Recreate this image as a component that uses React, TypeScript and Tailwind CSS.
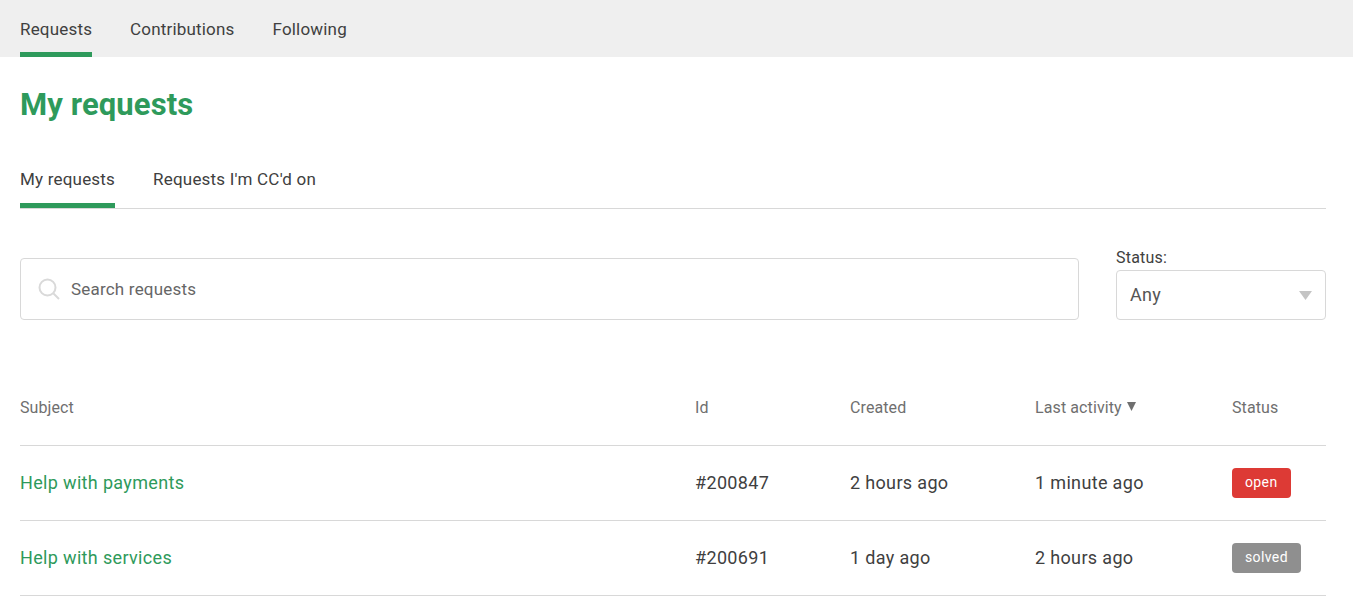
const green = "text-[#2e9a5b]";

function Tab({ label, active, small }: { label: string; active?: boolean; small?: boolean }) {
  return (
    <div
      className={`flex items-start border-b-[5px] text-[17px] text-[#404040] ${
        active ? "border-[#2e9a5b]" : "border-transparent"
      } ${small ? "h-[50px] pt-[9px] leading-[24px] tracking-[0.2px]" : "h-[57px] pt-[17px] leading-[24px] tracking-[0.18px]"}`}
    >
      {label}
    </div>
  );
}

const rows = [
  { subject: "Help with payments", id: "#200847", created: "2 hours ago", last: "1 minute ago", status: "open", color: "bg-[#dd3a35]" },
  { subject: "Help with services", id: "#200691", created: "1 day ago", last: "2 hours ago", status: "solved", color: "bg-[#8f8f8f]" },
];

const cols = "grid grid-cols-[675px_155px_185px_197px_94px] items-center";

export default function App() {
  return (
    <div className="min-h-[605px] bg-white font-['Roboto',sans-serif] text-[#404040]">
      <nav className="flex h-[57px] gap-[38px] bg-[#efefef] px-5">
        <Tab label="Requests" active />
        <Tab label="Contributions" />
        <Tab label="Following" />
      </nav>
      <main className="w-[1326px] pl-5">
        <h1 className={`mt-[27px] text-[31px] font-bold leading-[42px] tracking-[0.1px] ${green}`}>My requests</h1>
        <div className="mt-[32px] flex h-[51px] gap-[38px] border-b border-[#d8d8d8]">
          <Tab label="My requests" active small />
          <Tab label="Requests I'm CC'd on" small />
        </div>
        <div className="mt-[38px] flex items-end gap-[37px]">
          <div className="flex h-[62px] flex-1 items-center rounded border border-[#d8d8d8] pl-[17px]">
            <svg width="22" height="22" viewBox="0 0 22 22" fill="none" stroke="#d9d9d9" strokeWidth="2" className="mr-[11px] shrink-0">
              <circle cx="9.5" cy="9.5" r="8" />
              <path d="M15.5 15.5 L21 21" />
            </svg>
            <span className="pt-[2px] text-[17px] tracking-[0.2px] text-[#666]">Search requests</span>
          </div>
          <div className="w-[210px]">
            <div className="mb-[1px] text-[16px] leading-[22px] tracking-[0.2px] text-[#404040]">Status:</div>
            <div className="flex h-[50px] items-center justify-between rounded border border-[#d8d8d8] px-[13px]">
              <span className="pb-[2px] text-[18px] tracking-[0.3px] text-[#555]">Any</span>
              <svg width="13" height="9" viewBox="0 0 13 9" fill="#c4c4c4">
                <path d="M0 0 H13 L6.5 9 Z" />
              </svg>
            </div>
          </div>
        </div>
        <div className={`${cols} mt-[50px] h-[76px] border-b border-[#d8d8d8] text-[16px] tracking-[0.1px] text-[#6f6f6f]`}>
          <div>Subject</div>
          <div>Id</div>
          <div>Created</div>
          <div className="flex items-center gap-[5px]">
            Last activity
            <svg width="9" height="9" viewBox="0 0 9 9" fill="#6f6f6f" className="mb-[2px]">
              <path d="M0 0 H9 L4.5 9 Z" />
            </svg>
          </div>
          <div>Status</div>
        </div>
        {rows.map((r) => (
          <div key={r.id} className={`${cols} h-[75px] border-b border-[#d8d8d8] pb-[1px] text-[18px] tracking-[0.34px] text-[#404040]`}>
            <div className={green}>{r.subject}</div>
            <div>{r.id}</div>
            <div>{r.created}</div>
            <div>{r.last}</div>
            <div>
              <span className={`inline-flex h-[30px] items-center rounded px-[13px] text-[14px] tracking-[0.38px] text-white ${r.color}`}>
                {r.status}
              </span>
            </div>
          </div>
        ))}
      </main>
    </div>
  );
}
